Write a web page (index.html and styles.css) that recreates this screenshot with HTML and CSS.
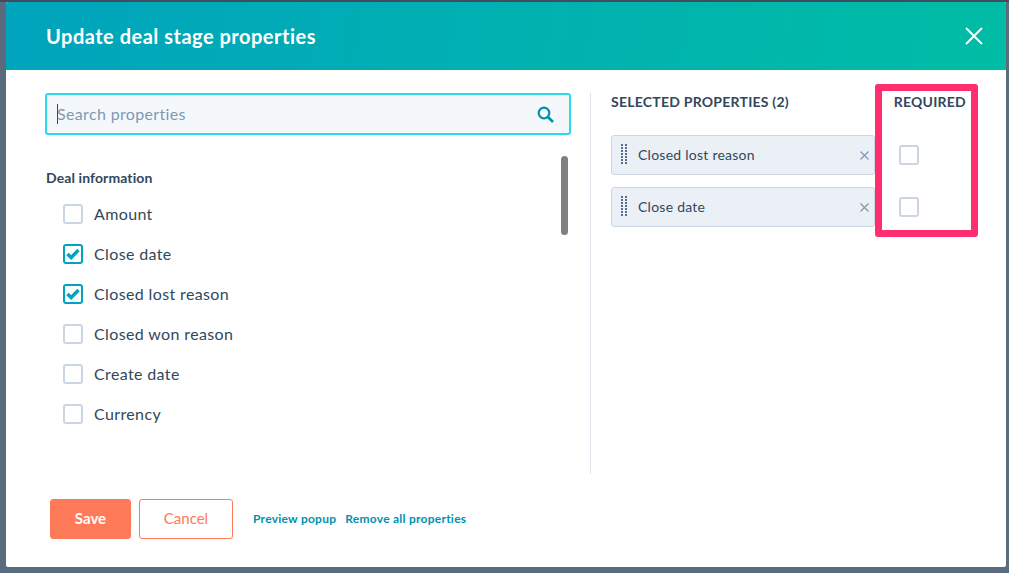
FILE: index.html
```html
<!DOCTYPE html>
<html lang="en">
<head>
	<meta charset="UTF-8">
	<title>Update deal stage properties</title>
	<link rel="stylesheet" href="styles.css">
</head>
<body>
	<div class="modal">
		<div class="modal-head">
			<h1>Update deal stage properties</h1>
			<svg class="close" width="18" height="18" viewBox="0 0 18 18"><path d="M1 1L17 17M17 1L1 17" stroke="#fff" stroke-width="2" fill="none"/></svg>
		</div>
		<div class="modal-body">
			<div class="left">
				<div class="search">
					<span class="caret"></span>
					<span class="label">Search properties</span>
					<svg class="search-icon" width="17" height="17" viewBox="0 0 17 17"><circle cx="7" cy="7" r="5.3" stroke="#0091ae" stroke-width="2.2" fill="none"/><path d="M11 11L16 16" stroke="#0091ae" stroke-width="2.6" fill="none"/></svg>
				</div>
				<div class="list-wrap">
					<h2>Deal information</h2>
					<ul class="list">
						<li><span class="cb"></span><span class="label">Amount</span></li>
						<li><span class="cb on"><svg width="14" height="12" viewBox="0 0 14 12"><path d="M1.5 6L5.2 9.5L12.5 2" stroke="#00a4bd" stroke-width="3.4" fill="none"/></svg></span><span class="label">Close date</span></li>
						<li><span class="cb on"><svg width="14" height="12" viewBox="0 0 14 12"><path d="M1.5 6L5.2 9.5L12.5 2" stroke="#00a4bd" stroke-width="3.4" fill="none"/></svg></span><span class="label">Closed lost reason</span></li>
						<li><span class="cb"></span><span class="label">Closed won reason</span></li>
						<li><span class="cb"></span><span class="label">Create date</span></li>
						<li><span class="cb"></span><span class="label">Currency</span></li>
					</ul>
					<div class="thumb"></div>
				</div>
			</div>
			<div class="right">
				<div class="right-head">
					<span>SELECTED PROPERTIES (2)</span>
					<span>REQUIRED</span>
				</div>
				<div class="row">
					<div class="chip">
						<svg class="grip" width="6" height="22" viewBox="0 0 6 22"><path d="M0 1H6M0 4H6M0 7H6M0 10H6M0 13H6M0 16H6M0 19H6" stroke="#516f90" stroke-width="2" stroke-dasharray="2 2" fill="none"/></svg>
						<span class="chip-text label">Closed lost reason</span>
						<svg class="chip-x" width="9" height="9" viewBox="0 0 9 9"><path d="M.5 .5L8.500 8.500M8.500 .5L.5 8.500" stroke="#7c98b6" stroke-width="1.200" fill="none"/></svg>
					</div>
					<span class="cb"></span>
				</div>
				<div class="row">
					<div class="chip">
						<svg class="grip" width="6" height="22" viewBox="0 0 6 22"><path d="M0 1H6M0 4H6M0 7H6M0 10H6M0 13H6M0 16H6M0 19H6" stroke="#516f90" stroke-width="2" stroke-dasharray="2 2" fill="none"/></svg>
						<span class="chip-text label">Close date</span>
						<svg class="chip-x" width="9" height="9" viewBox="0 0 9 9"><path d="M.5 .5L8.500 8.500M8.500 .5L.5 8.500" stroke="#7c98b6" stroke-width="1.200" fill="none"/></svg>
					</div>
					<span class="cb"></span>
				</div>
			</div>
		</div>
		<div class="modal-foot">
			<button class="btn save">Save</button>
			<button class="btn cancel">Cancel</button>
			<a class="link link-first">Preview popup</a>
			<a class="link">Remove all properties</a>
		</div>
	</div>
	<div class="highlight"></div>
</body>
</html>
```

FILE: styles.css
```css
*{
	margin: 0;
	padding: 0;
	box-sizing: border-box;
}
html,body{
	height: 100%;
	overflow: hidden;
}
body{
	background-color: #5b6b7e;
	border-top: 2px solid #414d5c;
	font-family: "Lato", "Liberation Sans", sans-serif;
	color: #33475b;
	position: relative;
}
li{
	list-style: none;
}
.label{
	margin-bottom: 2px;
}
.modal{
	width: 1000px;
	height: 565px;
	margin-left: 6px;
	background-color: #fff;
	border-radius: 2px;
	overflow: hidden;
}
.modal-head{
	height: 68px;
	padding: 0 23px 0 40px;
	display: flex;
	align-items: center;
	justify-content: space-between;
	background: linear-gradient(100deg, #00a4bd, #00bda5);
}
.modal-head h1{
	font-size: 20px;
	font-weight: 700;
	color: #fff;
	letter-spacing: 0.5px;
}
.modal-body{
	height: 404px;
	display: flex;
	padding-top: 23px;
}
.left{
	width: 585px;
	padding-left: 39px;
	padding-right: 19px;
	border-right: 1px solid #dfe3eb;
	height: 381px;
}
.search{
	height: 42px;
	width: 526px;
	display: flex;
	align-items: center;
	padding: 0 15px 0 10px;
	background-color: #f5f8fa;
	border: 2px solid #2ad9ee;
	border-radius: 3px;
	font-size: 16px;
	color: #7c98b6;
	letter-spacing: 0.35px;
}
.caret{
	width: 1px;
	height: 20px;
	margin-right: -1px;
	background-color: #33475b;
}
.search-icon{
	margin-left: auto;
}
.list-wrap{
	position: relative;
	padding-top: 35px;
}
.list-wrap h2{
	font-size: 14px;
	font-weight: 700;
	line-height: 16px;
	padding-left: 1px;
	letter-spacing: 0.1px;
}
.list{
	padding: 8px 0 0 18px;
}
.list li{
	height: 40px;
	display: flex;
	align-items: center;
	gap: 11px;
	font-size: 16px;
	letter-spacing: 0.37px;
}
.cb{
	width: 20px;
	height: 20px;
	flex: none;
	display: flex;
	align-items: center;
	justify-content: center;
	background-color: #fff;
	border: 2px solid #cbd6e2;
	border-radius: 3px;
}
.cb.on{
	border-color: #00a4bd;
}
.thumb{
	position: absolute;
	top: 21px;
	right: 3px;
	width: 7px;
	height: 79px;
	background-color: #808080;
	border-radius: 4px;
}
.right{
	flex: 1;
	padding-left: 20px;
}
.right-head{
	width: 355px;
	display: flex;
	justify-content: space-between;
	font-size: 14px;
	font-weight: 700;
	line-height: 18px;
	letter-spacing: 0.24px;
	margin-bottom: 24px;
}
.row{
	display: flex;
	align-items: center;
	gap: 24px;
	margin-bottom: 12px;
}
.chip{
	width: 264px;
	height: 40px;
	display: flex;
	align-items: center;
	padding: 0 5px 0 9px;
	background-color: #eaf0f6;
	border: 1px solid #cbd6e2;
	border-radius: 3px;
	font-size: 14px;
	letter-spacing: 0.25px;
}
.chip-text{
	margin-left: 11px;
}
.chip-x{
	margin-left: auto;
}
.modal-foot{
	display: flex;
	align-items: center;
	padding: 25px 0 0 44px;
}
.btn{
	height: 40px;
	padding-bottom: 2px;
	font-family: inherit;
	font-size: 15px;
	font-weight: 700;
	border-radius: 3px;
	border: 1px solid #ff7a59;
}
.save{
	width: 81px;
	background-color: #ff7a59;
	color: #fff;
}
.cancel{
	width: 94px;
	margin-left: 8px;
	background-color: #fff;
	color: #ff7a59;
	font-weight: 400;
}
.link{
	margin-bottom: 2px;
	font-size: 12px;
	font-weight: 700;
	letter-spacing: 0.25px;
	color: #0091ae;
	margin-left: 9px;
}
.link-first{
	margin-left: 20px;
}
.highlight{
	position: absolute;
	left: 875px;
	top: 82px;
	width: 103px;
	height: 153px;
	border: 7px solid #ff2e6e;
	border-radius: 3px;
}
```
